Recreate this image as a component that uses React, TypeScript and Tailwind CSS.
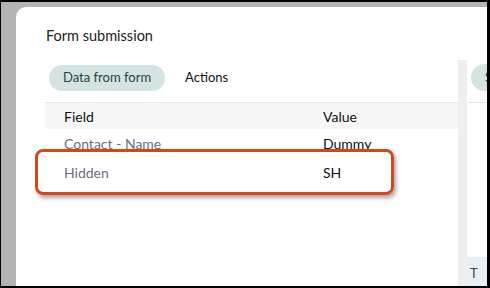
import React from "react";

export default function App() {
  return (
    <div className="w-[490px] h-[288px] bg-black pt-[2px] pl-[1px] pr-[3px] pb-[2px]" style={{ fontFamily: "Lato, 'Noto Sans', sans-serif" }}>
      <div className="h-full bg-[#b4b4b4] pl-[15px] pt-[5px] flex">
        <div className="relative flex-1 bg-white rounded-tl-[10px] flex overflow-hidden">
          {/* main column */}
          <div className="w-[442px] shrink-0 flex flex-col">
            <div className="mt-[19px] pl-[30px] text-[14.5px] leading-[20px] text-[#222]">Form submission</div>
            <div className="mt-[19px] pl-[33px] flex items-center gap-[5px] text-[13px]">
              <div className="h-[26px] px-[14px] rounded-full bg-[#d4e4e3] text-[#1f4545] flex items-center">Data from form</div>
              <div className="h-[26px] px-[15px] text-[#111] flex items-center">Actions</div>
            </div>
            <div className="mt-[11px] ml-[29px] border-t border-[#e6e6e6] text-[14px]">
              <div className="h-[26px] bg-[#f7f7f7] flex items-center text-[#111]">
                <div className="w-[278px] pl-[19px]">Field</div>
                <div>Value</div>
              </div>
              <div className="h-[29px] flex items-center">
                <div className="w-[278px] pl-[19px] text-[#6c6f7f]">Contact - Name</div>
                <div className="text-[#111]">Dummy</div>
              </div>
              <div className="h-[29px] flex items-center">
                <div className="w-[278px] pl-[19px] text-[#6c6f7f]">Hidden</div>
                <div className="text-[#111]">SH</div>
              </div>
            </div>
          </div>
          {/* divider strip */}
          <div className="w-[9px] shrink-0 mt-[53px] bg-[#eef0ef]" />
          {/* right panel */}
          <div className="flex-1 min-w-0 overflow-hidden flex flex-col">
            <div className="mt-[57px] ml-[4px] h-[27px] w-[90px] shrink-0 rounded-full bg-[#d4e4e3] text-[13px] text-[#1f4545] flex items-center pl-[14px] whitespace-nowrap">S</div>
            <div className="mt-[11px] border-t border-[#e6e6e6]" />
            <div className="mt-auto h-[29px] bg-[#e8f0f7] text-[13px] text-[#444] pl-[3px] pt-[7px] whitespace-nowrap">T</div>
          </div>
          {/* highlight */}
          <div className="absolute left-[19px] top-[142px] w-[359px] h-[46px] rounded-[8px] border-[3px] border-[#d4471a] shadow-[2px_3px_4px_rgba(0,0,0,0.35)]" />
        </div>
      </div>
    </div>
  );
}
